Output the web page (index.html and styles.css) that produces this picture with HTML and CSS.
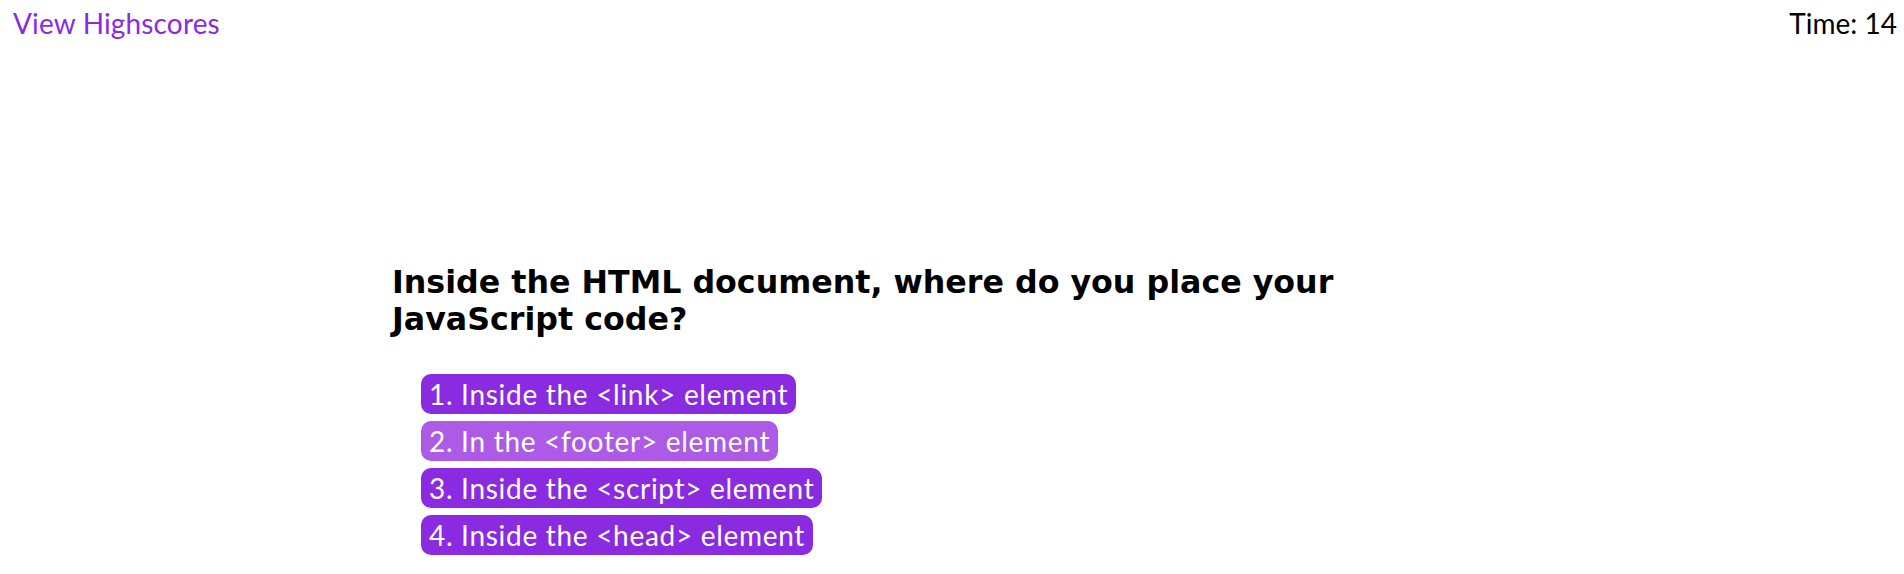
FILE: index.html
```html
<!DOCTYPE html>
<html lang="en">
<head>
<meta charset="utf-8">
<title>Code Quiz</title>
<link rel="stylesheet" href="styles.css">
</head>
<body>
<header class="topbar">
  <a class="highscores" href="#">View Highscores</a>
  <div class="timer">Time: 14</div>
</header>
<main class="quiz">
  <h1 class="question">Inside the HTML document, where do you place your JavaScript code?</h1>
  <div class="choices">
    <button class="choice">1. Inside the &lt;link&gt; element</button>
    <button class="choice choice-hover">2. In the &lt;footer&gt; element</button>
    <button class="choice">3. Inside the &lt;script&gt; element</button>
    <button class="choice">4. Inside the &lt;head&gt; element</button>
  </div>
</main>
</body>
</html>
```
FILE: styles.css
```css
html, body {
  margin: 0;
  padding: 0;
  background: #ffffff;
  font-family: Lato, "Open Sans", "DejaVu Sans", sans-serif;
  color: #000000;
}

.topbar {
  display: flex;
  justify-content: space-between;
  align-items: flex-start;
  padding: 6px 7px 0 13px;
  font-size: 28px;
  line-height: 34px;
}

.highscores {
  color: #8a2be2;
  text-decoration: none;
  letter-spacing: 0.15px;
}

.timer {
  color: #000000;
}

.quiz {
  margin: 224px 0 0 392px;
  width: 1000px;
}

.question {
  margin: 0;
  font-family: "DejaVu Sans", "Open Sans", sans-serif;
  font-size: 31.7px;
  line-height: 37px;
  font-weight: 700;
}

.choices {
  display: flex;
  flex-direction: column;
  align-items: flex-start;
  gap: 7px;
  margin: 36px 0 0 29px;
}

.choice {
  height: 40px;
  padding: 0 8px;
  border: none;
  border-radius: 10px;
  background: #8a2be2;
  color: #ffffff;
  font-family: inherit;
  font-size: 28px;
  letter-spacing: 0.7px;
  line-height: 40px;
  cursor: pointer;
}

.choice-hover {
  background: #ad5ae6;
}
```
